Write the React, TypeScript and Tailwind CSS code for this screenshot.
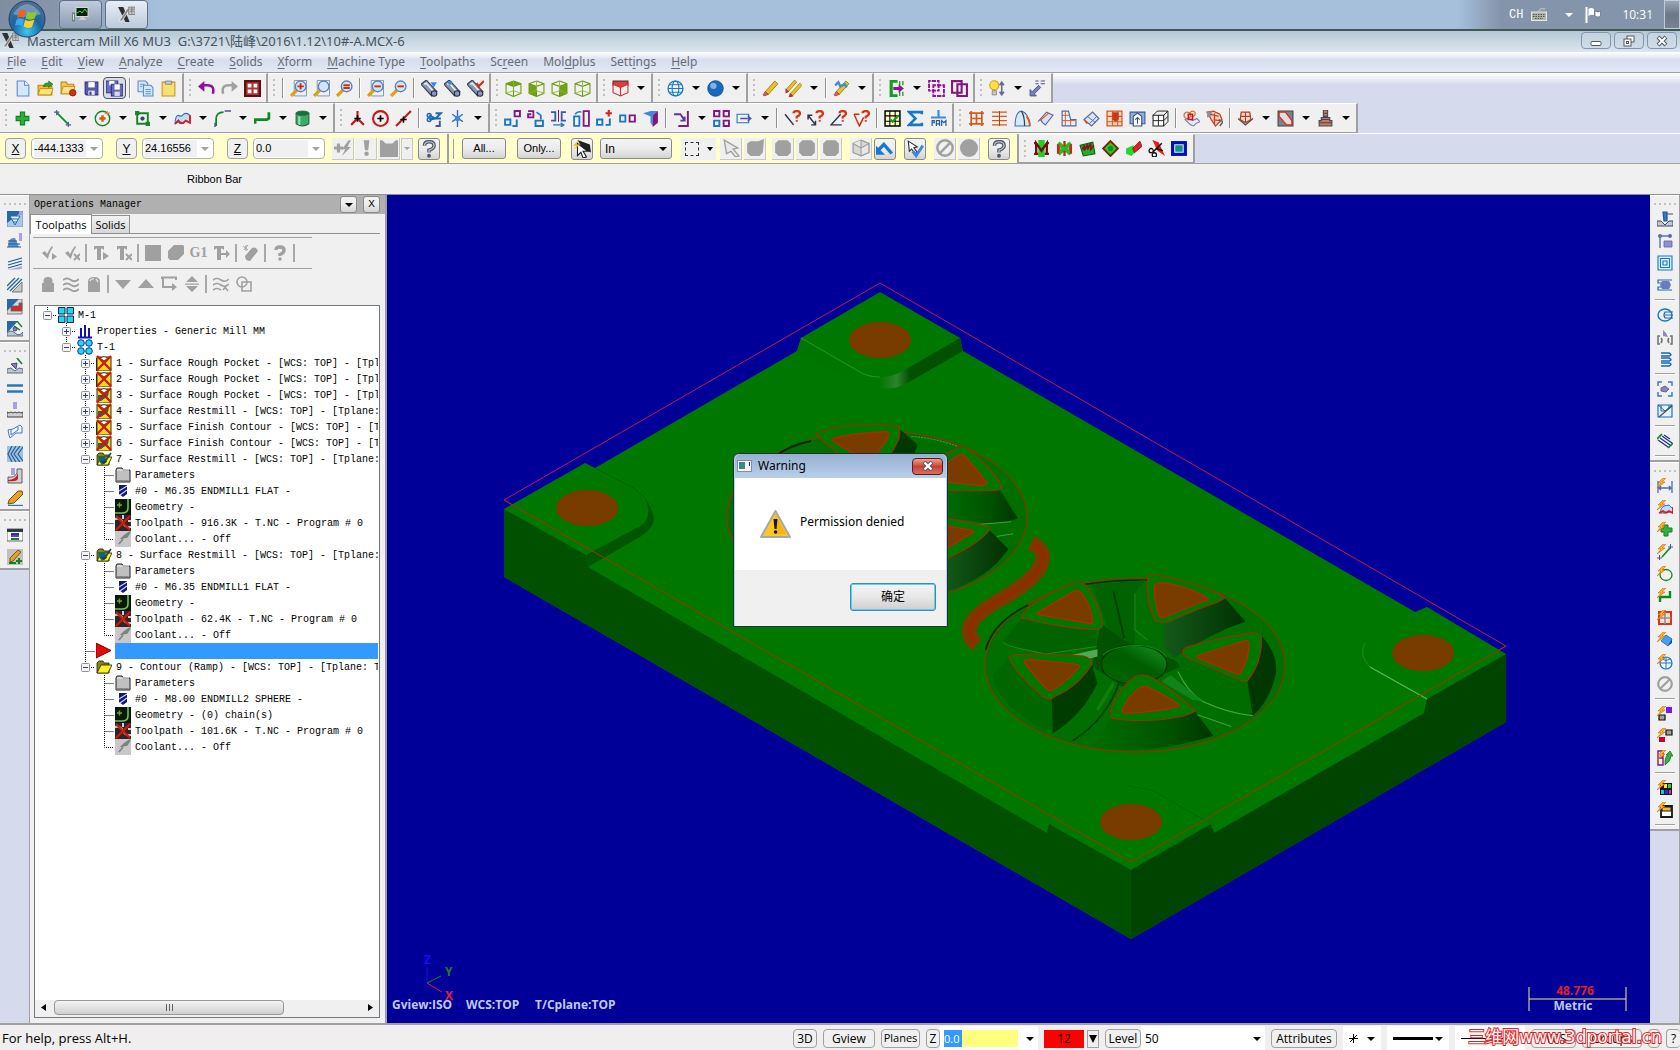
import { Fragment, type ReactNode } from "react";
import clsx from "clsx";

type Shape = [d: string, fill?: string, stroke?: string, width?: number];

const c = (x: number, y: number, r: number, ry = r) =>
  `M${x - r} ${y}a${r} ${ry} 0 1 0 ${2 * r} 0a${r} ${ry} 0 1 0 ${-2 * r} 0`;
const N = "none";

const CUBE = "M8 1L15 3.500V12.500L8 15.500L1 12.500V3.500Z";
const CUBE_IN = "M1 3.500L8 6L15 3.500M8 6V15.500";
const cube = (face: string): Shape[] => [
  [face, "#6fa316"],
  [CUBE, N, "#6a9a10", 1],
  [CUBE_IN, N, "#6a9a10", 1],
  ["M1 12.500L8 10L15 12.500M8 1V10", N, "#8db83c", 0.8],
];
const lens = (sign: string, dashed = false): Shape[] => [
  ...(dashed ? ([["M4 0.500H15.500V15H4Z", N, "#6a8ac0", 0.8]] as Shape[]) : []),
  ["M1 15L6.500 9.500", N, "#e0a010", 3],
  [c(10, 6, 5), "#cfe4fa", "#5a80b8", 1.3],
  [sign, N, "#d03010", 1.8],
];
const bino = (extra: Shape): Shape[] => [
  ["M0 4L5 0L15 11L10 15Z", "#8a95ae", "#333b55", 1],
  ["M3 4L5 3L12 11", N, "#e8ecf8", 1.6],
  [c(12.3, 12.7, 2.6), "#8898c0", "#222a44", 1],
  extra,
];
const pencil: Shape[] = [
  ["M3 11L12 1L15 3.500L6 13.500Z", "#e8c020", "#a07800", 0.8],
  ["M3 11L6 13.500L2 15L1 14Z", "#e06060", "#a03030", 0.7],
];
const bolt: Shape[] = [["M6 0L1 5H4L0 10L8 4H5L9 0Z", "#f8b820", "#d86010", 0.6]];
const ask = (d: string, color: string): Shape[] => [
  [d, N, color, 1.4],
  ["M9 3Q9 1 12 1Q15 1 15 3.500Q15 5 12 6.500V8", N, "#d03818", 2.2],
  ["M11 9.500H13V11H11Z", "#d03818"],
];
const redX: Shape = ["M1 1L15 15M15 1L1 15", N, "#d01808", 2.4];
const folder: Shape[] = [
  ["M1 4L3 2H7L8 4H13V14H1Z", "#8a8410", "#222200", 0.8],
  ["M1 14L5 6H16L12 14Z", "#fff020", "#222200", 0.8],
];
const G = "#a0a0a0";

const ICONS: Record<string, Shape[]> = {
  "New": [["M3 1H10L14 5V15H3Z", "#d4e8fc", "#5a8ac8", 1], ["M10 1V5H14", "#ffffff", "#5a8ac8", 1]],
  "Open": [["M1 5H6L7 6H14V14H1Z", "#f0c030", "#b88a10", 1], ["M3 8H15L13 14H1Z", "#ffe070", "#b88a10", 0.8], ["M6 6Q7 2 11 3V1L15 4L11 7V5Q9 5 8 6Z", "#30a030", "#107010", 0.6]],
  "Merge file": [["M1 2H6L7 4H13V13H1Z", "#f8c850", "#b88a10", 1], ["M3 6H14L12 13H1Z", "#ffe090", "#b88a10", 0.8], [c(12, 12, 3), "#d83010", "#901000", 0.8]],
  "Save": [["M2 2H14V14H3L2 13Z", "#5858b0", "#303080", 1], ["M5 2H11V7H5Z", "#ffffff"], ["M5 10H11V14H5Z", "#e8e8f8"], ["M6 11H8V14H6Z", "#404090"]],
  "Save as": [["M0 1H11V12H0Z", "#7070c0", "#303080", 1], ["M3 1H8V5H3Z", "#ffffff"], ["M5 4H16V15H5Z", "#6868b8", "#303080", 1], ["M8 4H13V9H8Z", "#ffffff"], ["M8 11H13V15H8Z", "#d8d8f0"]],
  "Copy": [["M1 1H8L10 3V11H1Z", "#d4e8fc", "#5a8ac8", 1], ["M6 5H13L15 7V15H6Z", "#d4e8fc", "#5a8ac8", 1], ["M8 9H13M8 11H13M8 13H13M3 4H7M3 6H5", N, "#5a8ac8", 0.9]],
  "Paste": [["M2 2H14V15H2Z", "#f8e070", "#c09820", 1], ["M5 1H11V4H5Z", "#c8c8c8", "#808080", 0.8]],
  "Undo": [["M14 13Q16 5 9 5H4", N, "#90109a", 2.4], ["M0 6L6 1V11Z", "#90109a"]],
  "Redo": [["M2 13Q0 5 7 5H12", N, G, 2.4], ["M16 6L10 1V11Z", G]],
  "Viewports": [["M1 1H15V15H1Z", "#b83030", "#581010", 2], ["M3.500 3.500H7V7H3.500ZM9 3.500H12.500V7H9ZM3.500 9H7V12.500H3.500ZM9 9H12.500V12.500H9Z", "#ffffff"]],
  "Zoom window": lens("M7 6H13M10 3V9", true),
  "Zoom target": lens("M0 0", true),
  "Unzoom previous": lens("M7 5H13M7 7.500H13"),
  "Unzoom window": lens("M7 6H13", true),
  "Unzoom 80%": lens("M7 6H13"),
  "Dynamic rotation": bino(["M9 2L15 2L12 7Z", "#3a8ae0"]),
  "Dynamic spin": bino(["M2 2L8 1L6 5Z", "#3a8ae0"]),
  "Previous view": bino(["M9 3L11 6L16 1", N, "#d03010", 2]),
  "Top view": cube("M8 1L15 3.500L8 6L1 3.500Z"),
  "Front view": cube("M1 3.500L8 6V15.500L1 12.500Z"),
  "Right view": cube("M15 3.500L8 6V15.500L15 12.500Z"),
  "Isometric view": cube("M0 0"),
  "Gview": [["M1 1H15V5L8 8L1 5Z", "#d84040", "#602020", 1], ["M1 4L8 7L15 4V12L8 15L1 12Z", "#ffe8e8", "#c03030", 1], ["M8 7V15", N, "#c03030", 1]],
  "Wireframe": [[c(8, 8, 7), "#f4faff", "#1878c0", 1.2], [c(8, 8, 3.2, 7), N, "#1878c0", 1], ["M1 8H15M2.500 4.500H13.500M2.500 11.500H13.500", N, "#1878c0", 1]],
  "Shaded": [[c(8, 8, 7.3), "#1868c0", "#104890", 0.8], [c(6, 5.5, 3), "#78b4f0"]],
  "Delete entities": pencil,
  "Delete duplicates": [["M1 9L9 0L11 2L3 11Z", "#e8c020", "#a07800", 0.7], ["M5 13L14 3L16 5L7 15Z", "#e8c020", "#a07800", 0.7], ["M1 9L3 11L1 12ZM5 13L7 15L4 16Z", "#d84848", "#a03030", 1]],
  "Undelete": [...pencil, ["M2 5L5 2L7 6L11 4L13 7", N, "#3a8ae0", 2.2]],
  "Hide entity": [["M9 1H3V15H9", N, "#10a020", 3], ["M11 1V5M14 1V5M11 11V15M14 11V15", N, "#10a020", 1.2], ["M5 6.500H10V4L15 8L10 12V9.500H5Z", "#90109a"]],
  "Blank entity": [["M1 1H10V10H1Z", N, "#90109a", 1.8], ["M5 5H15V15H5Z", N, "#90109a", 1.8], ["M0 3H16M0 13H16M3 0V16M13 0V16M0 8H16M8 0V16", N, "#f0f0f0", 0.9]],
  "Unblank entity": [["M1 1H10V12H1Z", N, "#801880", 2], ["M6 4H15V15H6Z", N, "#801880", 2]],
  "Hints": [[c(5, 5, 4.3), "#ffe040", "#d0a010", 1], ["M3 10H7V14H3Z", "#c8c8d0", "#808090", 0.8], ["M12 3V13M10 5L12 2L14 5M10 11L12 14L14 11", N, "#6868a0", 1.5]],
  "Origin": [["M1 15V9L3 11L9 5L11 7L5 13L7 15Z", "#7880b8", "#40488a", 0.8], ["M6 1H9M11 1H15M6 3.500H9M11 3.500H15", N, "#4a5290", 1]],

  "Point": [["M6 2H10V6H14V10H10V14H6V10H2V6H6Z", "#28b038", "#108020", 1]],
  "Line": [["M3 3L13 13", N, "#108820", 1.6], ["M0 2H5M2.500 0V5M11 14H16M13.500 11V16", N, "#4a5290", 1]],
  "Arc": [[c(8, 8, 6.8), N, "#108820", 1.3], ["M5 8H11M8 5V11", N, "#e05818", 2.4], ["M10 3H15M12.500 1V5", N, "#e08048", 1.2]],
  "Rectangle": [["M3 3H13V13H3Z", N, "#108820", 1.8], ["M1 1H5V5H1ZM11 11H15V15H11Z", "#108820"], [c(8, 8, 2), "#404060"]],
  "Surface": [["M1 13Q1 6 4 5Q7 7 9 4Q12 2 15 5V12Q12 9 9 12Q6 14 4 11Z", "#c0dcf8", "#3a6ab0", 1], ["M1 13L4 10Q6 13 9 12L11 10L15 12V5", N, "#d82020", 1.8]],
  "Fillet": [["M2 15V9Q2 2 9 2", N, "#108820", 1.7], ["M10 1H16M1 12V16", N, "#4a5290", 1.4]],
  "Spline": [["M1 13V9H12L14 8V2", N, "#108820", 2.6]],
  "Solid": [["M2 3V13Q8 17 14 13V3Z", "#40a868", "#1a6a38", 1], [c(8, 3, 6, 2), "#187040", "#1a6a38", 0.8], ["M5 6V14", N, "#90e0b0", 2]],
  "Trim 3": [["M8 1V8L2 14M8 8L14 14", N, "#c81818", 2], ["M5 8H11M8 5V11", N, "#000000", 1.5]],
  "Trim circle": [[c(8, 8, 7), N, "#c81818", 2], ["M5 8H11M8 5V11", N, "#000000", 1.6]],
  "Trim line": [["M1 15L15 1", N, "#c81818", 2], ["M5 9H11M8 6V12", N, "#000000", 1.5]],
  "Divide": [["M3 5L9 8H14M3 9L9 8L14 3H9", N, "#1868b8", 1.8], ["M9 15H13V10", N, "#4a5290", 1.8], [c(3, 5, 1.8), N, "#1868b8", 1.4], [c(3, 9, 1.8), N, "#1868b8", 1.4]],
  "Break": [["M8 0V16M3 4L13 11M13 4L3 11", N, "#3a6ac0", 1.3], [c(8, 8, 2.5), "#3a8ae0"]],
  "Translate": [["M1 9H6V14H1Z", N, "#1878c8", 1.8], ["M10 1H15V6H10Z", N, "#801880", 1.8], ["M8 15H12V9", N, "#1878c8", 1.8]],
  "Translate 3D": [["M1 1H6V7H1V4H4", N, "#801880", 1.7], ["M9 2L13 5V9", N, "#1878c8", 1.6], ["M8 10H15V15H8Z", N, "#1878c8", 1.8]],
  "Mirror": [["M1 2H5V10H1M15 2H11V10H15", N, "#3a5aa8", 1.7], ["M8 0V11", N, "#801880", 1], ["M3 14H13M10 12L13 14L10 16", N, "#1878c8", 1.2]],
  "Rotate": [["M1 6H6V15H1Z", N, "#1878c8", 1.7], ["M10 1H15V15H10Z", N, "#801880", 1.7], ["M2 4Q4 1 8 2", N, "#1878c8", 1.4]],
  "Scale": [["M1 9H6V14H1Z", N, "#1878c8", 1.8], ["M9 14H13V8", N, "#1878c8", 1.8], ["M9 3H15M12 0V6", N, "#d82020", 2]],
  "Offset": [["M1 5H6V11H1Z", N, "#1878c8", 1.7], ["M10 5H15V11H10Z", N, "#801880", 1.7]],
  "Contour offset": [["M1 3L8 1H15L10 5V15L8 12V6Z", "#3a8ae0"], ["M10 5L15 1V12L10 16Z", "#801880"]],
  "Project": [["M14 1V15H5", N, "#801880", 1.8], ["M1 4H7L11 10M7 10H11V6", N, "#5838a0", 1.7]],
  "Rectangular array": [["M1 1H6V6H1ZM10 1H15V6H10ZM10 10H15V15H10Z", N, "#801880", 1.8], ["M1 10H6V15H1Z", N, "#1878c8", 1.8]],
  "Roll": [["M1 4H12V12H1Z", N, "#1878c8", 1], ["M4 8H14M11 5.500L14 8L11 10.500", N, "#5050a0", 1.2]],
  "Analyze entity": ask("M1 4L9 14", "#303048"),
  "Analyze distance": ask("M1 5L8 14M1 9V5H5M4 14H8V10", "#303048"),
  "Analyze angle": ask("M10 4L1 14H11", "#303048"),
  "Analyze dynamic": ask("M1 4L6 15L10 7M1 4H6", "#c83010"),
  "Level manager": [["M1 1H15V15H1Z", "#ffffc0", "#000000", 1.4], ["M5.500 1V15M10.500 1V15M1 5.500H15M1 10.500H15", N, "#000000", 1], ["M6 9L8 11L14 5", N, "#10a020", 2]],
  "Summary": [["M14 4V2H2L8 8L2 14H14V12", N, "#1878c8", 2.4]],
  "RAM saver": [["M7 0H9V6H15V8H1V6H7Z", "#3a8ae0"], ["M2 15V10H4V12H2M6 15V10H9V15M6 13H9M11 15V10L13 12L15 10V15", N, "#205898", 1.1]],
  "Create ruled": [["M3 1V15M13 1V15M1 3H15M1 13H15M8 3V13M3 8H13", N, "#d85818", 1.6]],
  "Create swept": [["M1 2H15M1 6H15M1 10H15M1 14H15", N, "#d85818", 1.4], ["M8 1V15", N, "#b04010", 1]],
  "Create draft": [["M1 15Q1 2 7 1Q14 3 15 15Z", "#d8e8fc", "#3a6ab0", 1], ["M7 1Q10 6 10 15", "#ffffff", "#404040", 1.2], ["M12 6Q15 10 15 15", N, "#d85818", 1.6]],
  "Create extrude": [["M1 11L9 2L15 5L8 14Q4 12 4 9", "#e0e0f0", "#5a6aa0", 1.1], ["M3 10L11 3", N, "#d85818", 1]],
  "Create net": [["M2 1H8L10 9H15V15H2Z", "#e8f0fc", "#4a6ab0", 1.1], ["M5 1V15M2 5H9M2 10H14M10 10V15", N, "#d85818", 0.9]],
  "Create fence": [["M1 9L9 2L15 8L8 15Z", "#d8e8fc", "#5a6aa0", 1.1], ["M4 6L12 12M6 13L13 6", N, "#5a6aa0", 0.9], ["M1 9L4 13", N, "#d85818", 1.4]],
  "Create offset surface": [["M1 1H15V15H1Z", "#f8d8c8", "#d85818", 1.2], ["M6 1V15M11 1V15M1 6H15M1 11H15", N, "#d85818", 1], ["M6 2H12V9L9 11L6 9Z", "#c83818"]],
  "Create from solid": [["M1 2H15V13H1Z", "#8ab4e4", "#3a5a90", 1], ["M4 15V6L8 3L12 6V15Z", "#ffffff", "#305080", 1], ["M8 13V7M6 9L8 7L10 9", N, "#305080", 1]],
  "Create box": [["M1 5H11V15H1Z", "#ffffff", "#202020", 1], ["M1 5L5 1H15L11 5M15 1V11L11 15M6 5V15M1 10H11L15 6", N, "#202020", 0.9]],
  "Surface trim": [["M2 9Q6 7 9 10L13 8L16 11Q12 12 10 15L7 14Z", "#e8e8f4", "#6a7ab0", 1], [c(4, 5, 3), N, "#e07030", 1.2], [c(9, 3.5, 2.5), N, "#e07030", 1.2], ["M5 4H9V9H5Z", N, "#c81818", 1.5]],
  "Surface extend": [["M1 2L7 1L13 4L15 9L9 15L5 9Z", "#f8d8c8", "#c84020", 1.2], ["M1 2L6 1L5 6L1 7Z", "#909098"], ["M4 4L12 6M7 9L13 10M8 3V13", N, "#c84020", 1.2], ["M12 9L16 11L13 15", N, "#606068", 1.4]],
  "Surface fillet": [["M1 8L8 14L15 8", N, "#404858", 1.2], ["M4 2H12L13 9L8 12L3 9Z", "#f8e0d8", "#c03818", 1.2], ["M8 2V12M3 6H13", N, "#c03818", 1]],
  "Surface blend": [["M1 1H15V15H1Z", "#808088", "#404048", 1], ["M2 2H8L14 10V14H9L2 6Z", "#e8d8e0", "#c03818", 1.2]],
  "Surface tower": [["M6 0H10V6H6ZM4 7H12V10H14V15H2V10H4Z", "#c87858", "#404858", 1], ["M2 12H14M4 9H12M6 3H10", N, "#404858", 1]],

  "AutoCursor fast point": [["M0 8H8M4 4V12", N, G, 2.8], ["M13 1L7 9H10L7 15L15 7H12L15 1Z", G]],
  "AutoCursor override": [["M6 1H11L10 10H7Z", G], [c(8.5, 13, 2), G]],
  "AutoCursor android": [["M0 1H2L5 4H11L14 1H16V16H0Z", G]],
  "Help": [["M4 5Q4 1.500 8 1.500Q12.500 1.500 12.500 5Q12.500 7.500 8 9V11", N, "#505868", 3.2], ["M4 5Q4 1.500 8 1.500Q12.500 1.500 12.500 5Q12.500 7.500 8 9V11", N, "#c8d0dc", 1], [c(8, 14, 1.7), "#505868"]],
  "Select cursor": [["M4 0L15 4L16 11L11 9L7 5Z", "#202020"], ["M4 3L13 10L9 10L12 15L9 16L7 11L4 14Z", "#ffffff", "#202020", 1], ["M5 0L0 5H3L0 9L6 4H3Z", "#f8b820"]],
  "Arrow": [["M2 1L14 8L10 9L15 15L12 16L8 11L4 13Z", "#e8e8e8", G, 1.2]],
  "Hex": [["M4 1H12L15 4V12L12 15H4L1 12V4Z", G]],
  "Hex corner": [["M4 2H11L16 0L15 12L12 15H4L1 12V4Z", G]],
  "Shaded hex": [["M8 1L15 4V12L8 15L1 12V4Z", "#d8d8d8", G, 1.2], ["M8 8V15L15 12V4ZM8 1V8L1 4", "#e8e8e8", G, 1]],
  "Undo selection": [["M1 10L7 4L14 12", N, "#1878d0", 3], ["M0 5V13H8Z", "#1878d0"]],
  "Validate": [["M2 1L10 6L7 7L10 11L8 12L5 8L3 10Z", "#ffffff", "#303040", 1], ["M6 10L9 14L15 5", N, "#3a8ae0", 2.6]],
  "None": [[c(8, 8, 6.8), N, G, 2.2], ["M3.500 12.500L12.500 3.500", N, G, 2.2]],
  "Disc": [[c(8, 8, 8), G]],
  "Moldplus": [["M5 0H11V16H5Z", "#20d020"], ["M3 13V3L8 10L13 3V13M1 13H5M11 13H15M1 3H3M13 3H15", N, "#701010", 2.2]],
  "Mold split": [["M2 3L14 13M14 3L2 13", N, "#20c020", 4], ["M8 1V6M8 10V15M1 8H4M12 8H15M2 13V4M14 13V4", N, "#d02020", 2.2]],
  "Mold surface": [["M1 5L13 2L15 13L4 15Z", "#20b030", "#106010", 1], ["M3 9L5 5V10L8 4V9L11 3V9L14 5", N, "#801818", 1.5]],
  "Mold diamond": [["M8 1L15 8L8 15L1 8Z", "#20d020", "#802010", 1.8], [c(8, 8, 2.5), "#109020"]],
  "Mold slide": [["M1 8L8 5L10 11L6 15L1 13Z", "#20d830"], ["M7 8L14 1L16 6L9 12Z", "#e02020", "#901010", 0.7]],
  "Mold cut": [["M4 0L10 2L16 15L9 10Z", "#e02020"], ["M13 3L4 12M7 8L14 10", N, "#101010", 1.4], [c(3, 10, 2), "#fff", "#101010", 1.2], [c(6, 14, 2), "#fff", "#101010", 1.2]],
  "Mold frame": [["M0 1H15V15H0Z", "#0010b8"], ["M3.500 4.500H11.500V11.500H3.500Z", "#109088", "#d8e8f0", 1]],

  "Select all operations": [["M1 8L4 6L6 9Q9 3 11 1L12 2Q8 8 7 14Z", G], ["M11 8L16 11.500L11 15Z", G]],
  "Select all dirty": [["M1 8L4 6L6 9Q9 3 11 1L12 2Q8 8 7 14Z", G], ["M10 9L16 15M16 9L10 15", N, G, 2]],
  "Regenerate all": [["M1 1H11V5L9 3.500H8V15H4V3.500H3L1 5Z", G], ["M10 7L16 11L10 15Z", G]],
  "Regenerate dirty": [["M1 1H11V5L9 3.500H8V15H4V3.500H3L1 5Z", G], ["M10 9L16 15M16 9L10 15", N, G, 2]],
  "Backplot": [["M0 0H16V16H0Z", G]],
  "Verify": [["M6 0H15L16 1V9L10 15H2L0 13V6Z", G]],
  "Feed speed": [["M0 1H10V5L8 3.500H7V15H3V3.500H2L0 5Z", G], ["M7 8H12V5L16 9L12 13V10H7Z", G]],
  "Delete all operations": [["M2 11L9 3Q13 1 15 6L7 16Q2 16 2 11Z", G], ["M0 1L5 5M5 0L1 5M3 0V6", N, G, 1]],
  "Panel help": [["M4 5Q4 2 8 2Q12 2 12 5Q12 8 8 9.500V11", N, G, 3.4], [c(8, 14, 1.8), G]],
  "Toggle locking": [["M2 7H14V16H2Z", G], ["M4.500 8V5Q4.500 2 8 2Q11.500 2 11.500 5V8", G, G, 2]],
  "Toggle display": [["M0 4Q4 1 8 4T16 3M0 9Q4 6 8 9T16 8M0 14Q4 11 8 14T16 13", N, G, 1.8]],
  "Toggle posting": [["M2 6Q2 1 8 1Q14 1 14 6V16H2Z", G], ["M4 5Q5 2 8 3M10 3L12 6", N, "#f0f0f0", 1.2]],
  "Move down": [["M0 4H16L8 13Z", G]],
  "Move up": [["M0 12H16L8 3Z", G]],
  "Insert arrow": [["M1 3V1.500H15V4M2 2V11H13", N, G, 2], ["M11 7L16 11L11 15Z", G]],
  "Scroll arrow": [["M8 0L14 6H2ZM8 16L2 10H14ZM1 7.500H15V8.700H1Z", G]],
  "Only display": [["M0 4Q4 1 8 4T16 3M0 9Q4 6 8 9T16 8M0 14Q4 11 8 14M11 10L15 15M14 9L10 14", N, G, 1.6]],
  "Display geometry": [[c(6, 6, 5), N, G, 1.6], ["M6 6H15V15H6Z", N, G, 1.6]],

  "Rough parallel": [["M0 0H16V16H0Z", "#a8c8e8", "#808080", 0.8], ["M0 0H16L0 12Z", "#2868a8"], ["M3 5H13L8 14ZM5 8H11M6 11H10", "#e8f0f8", "#2868a8", 1], ["M12 0H15V4H12Z", "#a8a0e0"]],
  "Rough radial": [["M1 14Q1 4 8 5L12 14Z", "#5a90c8"], ["M1 8H10M1 11H13M0 14H14", N, "#205898", 1.2], ["M12 0H15V8H12Z", "#a8a0e0"]],
  "Rough flowline": [["M1 7L15 3M1 10L15 6M1 13L15 9", N, "#205898", 1.2], ["M1 15L15 11V14Z", "#b0a8e0"]],
  "Rough contour": [["M5 15H15V5Z", "#c8c8c8", "#606060", 0.8], ["M0 13L12 1M3 14L15 2M0 9L8 1", N, "#2868a8", 1.4]],
  "Rough restmill": [["M0 0H15V15H0Z", "#d8d8d8", "#606060", 0.8], ["M0 0H12L0 12Z", "#2868a8"], ["M4 7H12V4H15V12H4Z", "#c83030", "#606060", 0.8]],
  "Rough pocket": [["M0 0H11L0 12Z", "#2868a8"], ["M0 12Q4 8 8 12T16 11V15H0Z", "#b8c8d8", "#506070", 0.9], ["M7 5L13 9M10 0L15 6", N, "#108020", 1.3], [c(8, 8, 2), "#8878d0", "#303060", 0.8]],
  "Finish pencil": [["M0 11L4 10L8 13L12 10L16 11V15H0Z", "#b8c8d8", "#506070", 0.9], ["M10 0L15 6", N, "#108020", 1.6], ["M4 6L10 5L9 11Z", "#8878d0", "#303060", 0.8]],
  "Finish parallel": [["M0 5.500H16M0 11.500H16", N, "#2878b8", 2.4]],
  "Finish scallop": [["M0 10L2 11L4 10L6 11L8 10L10 11L12 10L14 11L16 10V15H0Z", "#d0d0d0", "#404040", 1], ["M6 0H10V7H6Z", "#a8a0e0"]],
  "Finish flowline": [["M1 6L6 5L13 1L15 3V9L9 9L3 14L2 11Z", "#f0f4fc", "#4878b8", 1], ["M4 6V11L11 6V3", N, "#4878b8", 1]],
  "Finish blend": [["M0 0H16V16H0Z", "#a0c0dc"], ["M5 0L1 8L5 16M9 0L4 8L9 16M13 0L7 8L13 16M16 1L11 8L16 15", N, "#2060a0", 1.2]],
  "Finish leftover": [["M1 15V9Q8 10 10 5V1H15V15Z", "#d0d0d0", "#505050", 0.9], ["M1 12Q9 12 11 5V11Q9 14 1 13Z", "#c82020"], ["M4 0H8V7H4Z", "#a8a0e0"]],
  "Finish steep": [["M2 10L11 1H15L16 4L7 13L1 14Z", "#e8a020", "#604010", 0.9], ["M1 15.500H16", N, "#2878c8", 1.4]],
  "Operation list": [["M0 2H16V14H0Z", "#ffffff", "#606870", 1], ["M0 2H16V5H0Z", "#303848"], ["M4 6H12V8H4Z", "#1830d0"], ["M4 8H12V10H4Z", "#8030c0"], ["M4 11H12V13H4Z", "#108030"]],
  "Edit operation": [["M0 0H16V16H0Z", "#c0c0c0"], ["M3 9L11 1L14 3L6 12L3 13Z", "#e8a020", "#604010", 0.8], ["M9 12H15M12 9V15M2 14H9", N, "#108020", 2]],

  "Contour toolpath": [["M0 10H4L8 14L12 10H16V15H0Z", "#c0c8d0", "#404858", 1], ["M6 1H10V10H7ZM10 3H16", "#3878c0", "#205898", 1.2]],
  "Drill toolpath": [["M3 13V3H13M13 3V1M3 15V13", N, "#4878b8", 1.4], [c(3, 3, 2), "#6868a8"], [c(13, 3, 2), "#6868a8"], ["M7 8H15V14H7Z", "#9090d0", "#6060a0", 0.8]],
  "Pocket toolpath": [["M1 1H15V15H1ZM3.500 3.500H12.500V12.500H3.500ZM6 6H10V10H6Z", "#d8f0fc", "#1878c0", 1.1]],
  "Face toolpath": [["M15 3H1V6H13M15 13H1V10H13", N, "#1868b8", 1.2], ["M5 4H12L14 8L12 12H5L3 8Z", "#7078c0"]],
  "Swept 2D": [[c(8, 8, 7, 6), N, "#1878c0", 1.4], ["M16 5H8Q6 8 8 11H16M8 8H16", N, "#1868b8", 1.2]],
  "Revolved": [["M3 7H1V15H3M13 7H15V15H13M4 9Q6 11 4 14M12 9Q10 11 12 14", N, "#707070", 1.5], ["M6 1L9 4L11 8L6 7Z", "#8888c8"]],
  "Lofted": [["M4 2H12Q16 4 12 5H4M4 7H12Q16 9 12 10H4M4 12H12Q16 13 12 15H4", N, "#1868b8", 1.4]],
  "Trim toolpath": [["M1 5V1H5M11 1H15V5M15 11V15H11M5 15H1V11", N, "#3878c0", 1.4], ["M4 7L8 5L12 8L9 11L4 10Z", "#8888b8", "#505080", 0.8]],
  "Transform toolpath": [["M1 2H15V14H1Z", "#e8f4fc", "#1868b8", 1.1], ["M1 2L8 8L15 2M4 2V8M8 8H4M12 2V6", N, "#1868b8", 1], ["M15 3L2 14", N, "#405060", 1.2]],
  "Thread": [["M0 6L5 1M11 15L16 10", N, "#108020", 1.6], ["M1 7L11 14M3 5L13 12M5 3L15 10M7 2L13 6", N, "#203890", 1.3]],
  "Smart dimension": [["M1 3V15M15 3V15M2 10H14M4 8L2 10L4 12M12 8L14 10L12 12", N, "#4870a8", 1.3], ...bolt],
  "Fast surface": [["M3 13Q4 7 7 6L12 5L16 9V13Q12 11 9 13Z", "#c0dcf8", "#3a6ab0", 1], ["M2 13L6 11Q9 14 12 11L16 13V7", N, "#d82020", 1.8], ...bolt],
  "Fast point": [["M7 3H11V6H15V10H11V14H7V10H4V6H7Z", "#38b040", "#108020", 1], ...bolt],
  "Fast line": [["M5 13L13 4", N, "#108820", 1.6], ["M11 3H16M13.500 0V5M0 14H5M2.500 11V16", N, "#4a5290", 1], ...bolt],
  "Fast arc": [[c(9, 9, 6, 5.5), N, "#108820", 1.3], ...bolt],
  "Fast spline": [["M3 14V9H13V3", N, "#108820", 2.4], ...bolt],
  "Fast net": [["M2 2H14V14H2Z", "#f0e0d8", "#e03018", 2], ["M8 2V14M2 8H14", N, "#909090", 1.6], ...bolt],
  "Fast solid": [["M9 3L15 7L11 14L4 9Z", "#48a0f0", "#1868b8", 0.8], ["M11 14L15 7V11Z", "#1050a0"], ...bolt],
  "Fast wireframe": [[c(9, 9, 6), "#f4faff", "#1878c0", 1.2], ["M3 9H15M9 3V15M5 5Q9 8 13 5", N, "#1878c0", 1], ...bolt],
  "Fast attribute": [["M9 1H15V7H9Z", "#7818f0"], ["M2 9H8V14H2Z", "#a0a0a0", "#101010", 1.2], ...bolt],
  "Fast colour": [["M9 2H15V7H9Z", "#a0a0a0", "#101010", 1.2], ["M2 9H8V14H2Z", "#c80030"], ...bolt],
  "Fast group": [["M1 1H6V15H1ZM1 8H6", N, "#801880", 1.4], ["M8 13Q8 6 11 5H9L13 1L16 6H14Q14 11 8 15Z", "#38b040", "#108020", 0.8], ...bolt],
  "Fast palette": [["M3 3H15V15H3Z", "#181818"], ["M7 4H10V8H7Z", "#f0f020"], ["M11 4H14V8H11Z", "#30d030"], ["M4 10H7V14H4Z", "#20c0e0"], ["M8 10H11V14H8Z", "#2030e0"], ["M12 10H14V14H12Z", "#e020e0"], ...bolt],
  "Fast level": [["M4 4H15V15H4Z", "#ffffff", "#181818", 1.8], ["M5 5H14V9H5Z", "#f0c020", "#181818", 1], ...bolt],

  "Machine group": [["M0.500 0.500H7V7H0.500ZM9 0.500H15.500V7H9ZM0.500 9H7V15.500H0.500ZM9 9H15.500V15.500H9Z", "#20d8f0", "#102050", 1]],
  "Properties": [["M1 14.500H15M4 14V5M8 14V2M12 14V5", N, "#1010b8", 2]],
  "Toolpath group": [[c(4, 4, 3.3) + c(12, 4, 3.3) + c(4, 12, 3.3) + c(12, 12, 3.3), "#20d8f0", "#1030a0", 1]],
  "Dirty": [["M0 3H2V16H0Z", "#402000"], ["M1 2H15V16H1Z", "#f8d820", "#303000", 1], ["M4 3Q8 0 12 3L8 6Z", "#ffffff", "#402000", 0.8], redX],
  "Dirty checked": [["M1 2H15V16H1Z", "#f8d820", "#303000", 1], ["M4 3Q8 0 12 3L8 6Z", "#ffffff", "#402000", 0.8], ["M2 8H8L13 4L12 9L5 14H2Z", "#107068"], redX],
  "Folder open": folder,
  "Folder checked": [...folder, ["M2 5H9L11 11L6 14L3 10Z", "#106868"], ["M6 10L8 12L15 2", N, "#203860", 1.6]],
  "Parameters": [["M1 3L2 1H7L8 3H15V15H1Z", "#c0c0c0", "#202020", 1], ["M2 3H14", N, "#f0f0f0", 1], ["M1 14H15", N, "#707070", 1.4]],
  "Tool": [["M4 2H12V11L8 14L4 11Z", "#101878"], ["M4 8L12 3M5 12L12 7", N, "#d8d8f8", 1.1]],
  "Geometry": [["M0 0H16V16H0Z", "#0a180a"], ["M13 0V9Q13 14 7 14H0", N, "#70c060", 1.6], ["M2 6H7M4.500 3.500V8.500", N, "#70a040", 1.4]],
  "Toolpath file": [["M0 0H16V16H0Z", "#282828"], ["M0 4Q6 3 8 8T16 12M8 0V4M13 6H16", N, "#d0d0d0", 2], redX],
  "Coolant": [["M0 0H16V16H0Z", "#c8c8c8"], ["M4 13L8 8M7 7L12 6L15 1L12 3L9 5Z", "#909090", "#808080", 1.6]],
  "Insert position": [["M0 0L15 7.500L0 15Z", "#e80808", "#700000", 1]],
};

function Icon({ name, size = 17 }: { name: string; size?: number }) {
  return (
    <svg width={size} height={size} viewBox="0 0 16 16" aria-hidden className="shrink-0">
      {ICONS[name].map(([d, fill, stroke, width], i) => (
        <path key={i} d={d} fill={fill ?? "none"} stroke={stroke} strokeWidth={width} />
      ))}
    </svg>
  );
}

function Caret({ className = "" }: { className?: string }) {
  return (
    <svg width="8" height="4" viewBox="0 0 8 4" aria-hidden className={clsx("shrink-0", className)}>
      <path d="M0 0H8L4 4Z" fill="currentColor" />
    </svg>
  );
}

function ToolButton({ name }: { name: string }) {
  const pressed = name === "Save as";
  return (
    <button
      aria-label={name}
      className={clsx(
        "flex h-[22px] w-[23px] items-center justify-center",
        pressed && "rounded border border-gray-600 bg-[#d8dce4]",
      )}
    >
      <Icon name={name} />
    </button>
  );
}

// "|" is a separator, "v" a drop-down arrow, anything else an icon name
function ToolItems({ items }: { items: string[] }) {
  return (
    <>
      {items.map((item, i) => (
        <Fragment key={i}>
          {item === "|" && <span className="mx-[3px] h-5 w-[2px] border-r border-white bg-[#909090]" />}
          {item === "v" && (
            <button aria-label="More" className="flex h-5 w-[17px] items-center justify-center text-black">
              <Caret />
            </button>
          )}
          {item !== "|" && item !== "v" && <ToolButton name={item} />}
        </Fragment>
      ))}
    </>
  );
}

function Grip() {
  return <span className="ml-[5px] mr-1 h-[18px] w-[2px] bg-[repeating-linear-gradient(to_bottom,#c0c0c0_0_2px,transparent_2px_5px)]" />;
}

function ToolBar({ items }: { items: string[] }) {
  return (
    <div role="toolbar" className="flex items-center border-r-2 border-b border-t border-t-white border-r-[#a0a0a0] border-b-[#a0a0a0] bg-[#f0f0f0] pr-[2px]">
      <Grip />
      <ToolItems items={items} />
    </div>
  );
}

const ROW_ONE = [
  ["New", "Open", "Merge file", "Save", "Save as", "|", "Copy", "Paste"],
  ["Undo", "Redo", "Viewports"],
  ["|", "Zoom window", "Zoom target", "Unzoom previous", "|", "Unzoom window", "Unzoom 80%", "|", "Dynamic rotation", "Dynamic spin", "Previous view"],
  ["Top view", "Front view", "Right view", "Isometric view"],
  ["Gview", "v"],
  ["Wireframe", "v", "Shaded", "v"],
  ["Delete entities", "Delete duplicates", "v", "|", "Undelete", "v"],
  ["Hide entity", "v", "Blank entity", "Unblank entity"],
  ["Hints", "v", "Origin"],
];

const ROW_TWO = [
  ["Point", "v", "Line", "v", "Arc", "v", "Rectangle", "v", "Surface", "v", "Fillet", "v", "Spline", "v", "Solid", "v"],
  ["Trim 3", "Trim circle", "Trim line", "|", "Divide", "Break", "v"],
  ["Translate", "Translate 3D", "Mirror", "Rotate", "Scale", "Offset", "Contour offset", "|", "Project", "v", "Rectangular array", "Roll", "v", "|", "Analyze entity", "Analyze distance", "Analyze angle", "Analyze dynamic", "|", "Level manager", "Summary", "RAM saver"],
  ["Create ruled", "Create swept", "Create draft", "Create extrude", "Create net", "Create fence", "Create offset surface", "Create from solid", "Create box", "|", "Surface trim", "Surface extend", "|", "Surface fillet", "v", "Surface blend", "v", "Surface tower", "v"],
];

const MOLDPLUS = ["Moldplus", "Mold split", "Mold surface", "Mold diamond", "Mold slide", "Mold cut", "Mold frame"];

const LEFT_BARS = [
  ["Rough parallel", "Rough radial", "Rough flowline", "Rough contour", "Rough restmill", "Rough pocket"],
  ["Finish pencil", "Finish parallel", "Finish scallop", "Finish flowline", "Finish blend", "Finish leftover", "Finish steep"],
  ["Operation list", "Edit operation"],
];

const RIGHT_BARS = [
  ["Contour toolpath", "Drill toolpath", "Pocket toolpath", "Face toolpath", "|", "Swept 2D", "Revolved", "Lofted", "|", "Trim toolpath", "Transform toolpath", "|", "Thread", "|"],
  ["Smart dimension", "Fast surface", "Fast point", "Fast line", "Fast arc", "Fast spline", "Fast net", "Fast solid", "Fast wireframe", "None", "|", "Fast attribute", "Fast colour", "Fast group", "|", "Fast palette", "Fast level", "|"],
];

function Taskbar() {
  return (
    <header className="relative z-10 flex h-[31px] shrink-0 items-stretch border-b-2 border-[#405858] bg-[#a6c0dc] bg-[linear-gradient(to_right,#7f8da3_0,#8794aa_50px,#a6c0dc_160px)]">
      <button aria-label="Start" className="-mb-2 ml-2 h-[38px] w-[38px]">
        <svg viewBox="0 0 38 38" aria-hidden>
          <defs>
            <radialGradient id="orb" cx="50%" cy="85%" r="80%">
              <stop offset="0" stopColor="#40c8f0" />
              <stop offset="0.5" stopColor="#1a66a0" />
              <stop offset="1" stopColor="#506c90" />
            </radialGradient>
          </defs>
          <circle cx="19" cy="19" r="18" fill="url(#orb)" stroke="#1c4468" />
          <path d="M5 14Q19 -6 33 14Q19 20 5 14Z" fill="#a8c0d8" opacity="0.5" />
          <path d="M11 11Q14 8 18 11L16 18Q13 16 9 18Z" fill="#f06028" />
          <path d="M19.500 11.500Q24 14 29 11L27 18Q23 21 17.500 18.500Z" fill="#8cc830" />
          <path d="M8.500 19.500Q12 17 16 19.500L14 26Q10 24 7 26Z" fill="#38a8f0" />
          <path d="M17 20Q22 22 26.500 19.500L24 27Q20 29 15.500 26.500Z" fill="#f8d030" />
        </svg>
      </button>
      <button aria-label="Monitor" className="ml-[13px] flex w-[43px] items-center justify-center rounded-sm border border-[#5f7088] bg-linear-to-b from-[#c0ccdc] to-[#8c9cb4]">
        <svg width="17" height="15" viewBox="0 0 17 15" aria-hidden>
          <rect x="0.500" y="6" width="2" height="8" fill="#d0e0c0" stroke="#708070" />
          <rect x="4" y="0.500" width="12" height="9" fill="#082008" stroke="#d8d8d8" />
          <path d="M5 6L8 4L10 6L13 2L15 5" fill="none" stroke="#30e040" />
          <path d="M7 13H14L12 10H9Z" fill="#d0d0d0" />
        </svg>
      </button>
      <button aria-label="Mastercam" className="ml-[3px] flex w-[43px] items-center justify-center rounded-sm border border-[#5f7088] bg-linear-to-b from-[#e8eef6] to-[#bccadc]">
        <XLogo />
      </button>
      <div className="ml-auto flex items-center bg-linear-to-r from-transparent to-[#8494aa] to-20% pl-[52px] font-['Open_Sans'] text-xs text-white">
        <span className="font-['Liberation_Mono']">CH</span>
        <svg width="16" height="13" viewBox="0 0 16 13" aria-hidden className="ml-2">
          <path d="M8 3Q8 0 14 1" fill="none" stroke="#d0d0c8" />
          <rect x="0.500" y="4" width="15" height="8.500" fill="#b0b4b0" stroke="#e8e8e0" />
          <path d="M2 6.500H14M2 8.500H14M4 10.500H12" stroke="#505860" strokeDasharray="1.500 1" />
        </svg>
        <button aria-label="Show hidden icons" className="ml-[18px]"><Caret /></button>
        <svg width="17" height="16" viewBox="0 0 17 16" aria-hidden className="ml-3">
          <path d="M1.500 0V16" stroke="#fff" strokeWidth="2" />
          <path d="M3.500 2Q6 0 9 2V8Q6 7 3.500 9Z" fill="#fff" />
          <path d="M10 4Q13 6 15.500 4V9Q13 11 10 9Z" fill="#fff" stroke="#505c70" strokeWidth="0.600" />
        </svg>
        <span className="ml-5">10:31</span>
        <button aria-label="Show desktop" className="ml-[11px] h-full w-4 border border-[#c0ccd8] bg-linear-to-b from-[#9aa6b6] via-[#6c7888] to-[#788494]" />
      </div>
    </header>
  );
}

function XLogo() {
  return (
    <svg width="17" height="17" viewBox="0 0 16 16" aria-hidden className="shrink-0">
      <path d="M0 1H5L11 15H7Z" fill="#303030" />
      <path d="M9 2L11 3L4 14L1 14Z" fill="#888" stroke="#fff" strokeWidth="0.600" />
      <path d="M10 1H16V8H10Z" fill="#c8c8c8" stroke="#707070" strokeWidth="0.700" />
      <path d="M11 3H15M11 5H15M13 1V8" stroke="#707070" strokeWidth="0.700" />
    </svg>
  );
}

function TitleBar() {
  const button = "flex h-[17px] w-[30px] items-center justify-center rounded-sm border border-[#8494ac] bg-[#cbd9e8]/60";
  return (
    <div className="flex h-[21px] shrink-0 items-center bg-linear-to-b from-[#b6c8d4] to-[#dbe6f0] pb-0.5 pl-0.5 pr-[3px]">
      <XLogo />
      <h1 className="ml-2 whitespace-pre font-['Noto_Sans','Noto_Sans_CJK_SC',sans-serif] text-[13px] leading-[18px] text-[#46525e]">
        {"Mastercam Mill X6 MU3  G:\\3721\\陆峰\\2016\\1.12\\10#-A.MCX-6"}
      </h1>
      <div className="ml-auto flex gap-[3px]">
        <button aria-label="Minimize" className={button}>
          <svg width="12" height="12" viewBox="0 0 12 12"><rect x="1" y="6.500" width="10" height="4" rx="1" fill="#fff" stroke="#505860" /></svg>
        </button>
        <button aria-label="Restore" className={button}>
          <svg width="12" height="12" viewBox="0 0 12 12" fill="#fff" stroke="#505860">
            <rect x="4" y="1" width="7" height="6" /><rect x="1" y="4" width="7" height="7" /><rect x="3.500" y="6.500" width="2" height="2" />
          </svg>
        </button>
        <button aria-label="Close" className={button}>
          <svg width="12" height="12" viewBox="0 0 12 12">
            <path d="M2 2L10 10M10 2L2 10" stroke="#505860" strokeWidth="4" /><path d="M2.500 2.500L9.500 9.500M9.500 2.500L2.500 9.500" stroke="#fff" strokeWidth="2" />
          </svg>
        </button>
      </div>
    </div>
  );
}

const MENUS: [string, string, string][] = [
  ["", "F", "ile"], ["", "E", "dit"], ["", "V", "iew"], ["", "A", "nalyze"], ["", "C", "reate"], ["", "S", "olids"], ["", "X", "form"],
  ["", "M", "achine Type"], ["", "T", "oolpaths"], ["Sc", "r", "een"], ["Mol", "d", "plus"], ["Sett", "i", "ngs"], ["", "H", "elp"],
];

function MenuBar() {
  return (
    <nav className="flex h-[21px] shrink-0 items-center gap-[15px] border-b border-[#a0a0a0] bg-linear-to-b from-white via-[#d8deee] via-40% to-[#e4e8f4] pb-px pl-[7px] font-['Noto_Sans',sans-serif] text-xs leading-[18px] text-[#686c74]">
      {MENUS.map(([before, key, after]) => (
        <button key={key + after}>
          {before}
          <u className="underline-offset-2">{key}</u>
          {after}
        </button>
      ))}
    </nav>
  );
}

const glossy = "rounded-[3px] border border-[#8a8a8a] bg-linear-to-b from-[#f4f4f4] via-[#ececec] to-[#d4d4d4]";

function Coordinate({ axis, value }: { axis: string; value: string }) {
  return (
    <div className="flex items-center">
      <button className="mr-[5px] flex h-[21px] w-[21px] items-center justify-center rounded-sm border border-[#a0a0a0] bg-[#f0f0f0] text-xs underline">
        {axis}
      </button>
      <div className="flex h-[21px] w-[72px] items-center rounded-sm border border-[#b0b0b0] bg-white pr-1">
        <input aria-label={`${axis} coordinate`} defaultValue={value} className="ml-[2px] min-w-0 flex-1 bg-[#f0f0f0] text-[11px]" />
        <Caret className="ml-1 text-[#a0a0a0]" />
      </div>
    </div>
  );
}

function SmallButton({ name, raised }: { name: string; raised?: boolean }) {
  return (
    <button
      aria-label={name}
      className={clsx(
        "flex h-[22px] w-[22px] shrink-0 items-center justify-center",
        raised ? glossy : "border-r border-b border-[#c8c8c8] bg-[#f0f0f0]",
      )}
    >
      <Icon name={name} size={18} />
    </button>
  );
}

function InputRow() {
  return (
    <div className="flex h-[31px] shrink-0 border-t border-b border-t-white border-b-[#a0a0a0] bg-[#d5dbec]">
      <div className="flex items-center border-r-2 border-[#a0a0a0] bg-[#ffffcc] pl-[5px] pr-[7px]">
        <div className="flex gap-[13px]">
          <Coordinate axis="X" value="-444.1333" />
          <Coordinate axis="Y" value="24.16556" />
          <Coordinate axis="Z" value="0.0" />
        </div>
        <div className="ml-[7px] flex items-center gap-px">
          <SmallButton name="AutoCursor fast point" />
          <SmallButton name="AutoCursor override" />
          <SmallButton name="AutoCursor android" />
          <button aria-label="AutoCursor options" className="mr-1 flex h-[22px] w-3 items-center justify-center border border-[#c8c8c8] bg-[#f0f0f0] text-[#a0a0a0]">
            <svg width="6" height="3"><path d="M0 0H6L3 3Z" fill="currentColor" /></svg>
          </button>
          <SmallButton name="Help" raised />
        </div>
      </div>
      <div className="flex items-center border-r-2 border-[#a0a0a0] bg-[#ffffcc] pl-1 pr-[7px] text-[11px]">
        <span className="mr-2 h-5 w-px bg-[#a0a0a0]" />
        <button className={clsx("mr-[11px] h-[21px] w-11", glossy)}>All...</button>
        <button className={clsx("mr-2.5 h-[21px] w-11", glossy)}>Only...</button>
        <SmallButton name="Select cursor" raised />
        <div className={clsx("relative ml-[7px] h-[21px] w-[72px]", glossy)}>
          <select aria-label="Selection mode" className="h-full w-full appearance-none pl-1 text-xs">
            <option>In</option>
          </select>
          <Caret className="pointer-events-none absolute right-1 top-2" />
        </div>
        <div className="ml-[9px] mr-1 flex h-[22px] w-[35px] items-center gap-2 bg-[#f0f0f0] pl-1">
          <button aria-label="Selection window" className="h-[14px] w-[14px] border border-dashed border-[#303030]" />
          <svg width="6" height="4"><path d="M0 0H6L3 4Z" /></svg>
        </div>
        <div className="flex gap-0.5">
          <SmallButton name="Arrow" />
          <SmallButton name="Hex corner" />
        </div>
        <div className="ml-1.5 flex gap-0.5">
          <SmallButton name="Hex" />
          <SmallButton name="Hex" />
          <SmallButton name="Hex" />
        </div>
        <div className="ml-2 flex gap-0.5">
          <SmallButton name="Shaded hex" />
          <SmallButton name="Undo selection" raised />
        </div>
        <div className="ml-2 flex gap-2">
          <SmallButton name="Validate" raised />
          <div className="flex gap-0.5">
            <SmallButton name="None" />
            <SmallButton name="Disc" />
          </div>
          <SmallButton name="Help" raised />
        </div>
      </div>
      <ToolBar items={MOLDPLUS} />
    </div>
  );
}

function SideBar({ bars }: { bars: string[][] }) {
  return (
    <aside className="flex w-[30px] shrink-0 flex-col border-r border-[#a0a0a0] bg-[#d5dbec]">
      {bars.map((items, i) => (
        <div key={i} role="toolbar" className="flex flex-col items-center border-b-2 border-t border-b-[#a0a0a0] border-t-white bg-[#f0f0f0]">
          <span className="mb-[3px] mt-[7px] h-[2px] w-[22px] bg-[repeating-linear-gradient(to_right,#c0c0c0_0_2px,transparent_2px_5px)]" />
          {items.map((item, j) =>
            item === "|" ? (
              <span key={j} className="my-[3px] h-[2px] w-5 border-b border-white bg-[#a0a0a0]" />
            ) : (
              <button key={j} aria-label={item} className="flex h-[22px] w-6 items-center justify-center">
                <Icon name={item} size={16} />
              </button>
            ),
          )}
        </div>
      ))}
    </aside>
  );
}

// guides, one per indent level: "+"/"-" expander, "|" passing line, "T" branch, "L" last branch, " " blank
const children = (guide: string, tool: string, geometry: string, toolpath: string): [string, string, string][] => [
  [guide + "T", "Parameters", "Parameters"],
  [guide + "T", "Tool", tool],
  [guide + "T", "Geometry", geometry],
  [guide + "T", "Toolpath file", toolpath],
  [guide + "L", "Coolant", "Coolant... - Off"],
];

const TREE: [string, string, string][] = [
  ["-", "Machine group", "M-1"],
  [" +", "Properties", "Properties - Generic Mill MM"],
  [" -", "Toolpath group", "T-1"],
  ["  +", "Dirty", "1 - Surface Rough Pocket - [WCS: TOP] - [Tplane: TOP]"],
  ["  +", "Dirty", "2 - Surface Rough Pocket - [WCS: TOP] - [Tplane: TOP]"],
  ["  +", "Dirty checked", "3 - Surface Rough Pocket - [WCS: TOP] - [Tplane: TOP]"],
  ["  +", "Dirty checked", "4 - Surface Restmill - [WCS: TOP] - [Tplane: TOP]"],
  ["  +", "Dirty", "5 - Surface Finish Contour - [WCS: TOP] - [Tplane: TOP]"],
  ["  +", "Dirty checked", "6 - Surface Finish Contour - [WCS: TOP] - [Tplane: TOP]"],
  ["  -", "Folder checked", "7 - Surface Restmill - [WCS: TOP] - [Tplane: TOP]"],
  ...children("  |", "#0 - M6.35 ENDMILL1 FLAT -", "Geometry -", "Toolpath - 916.3K - T.NC - Program # 0"),
  ["  -", "Folder checked", "8 - Surface Restmill - [WCS: TOP] - [Tplane: TOP]"],
  ...children("  |", "#0 - M6.35 ENDMILL1 FLAT -", "Geometry -", "Toolpath - 62.4K - T.NC - Program # 0"),
  ["  T", "Insert position", ""],
  ["  -", "Folder open", "9 - Contour (Ramp) - [WCS: TOP] - [Tplane: TOP]"],
  ...children("   ", "#0 - M8.00 ENDMILL2 SPHERE -", "Geometry - (0) chain(s)", "Toolpath - 101.6K - T.NC - Program # 0"),
];

const GUIDE: Record<string, string> = {
  " ": "",
  "|": "M9.500 0V16",
  "T": "M9.500 0V16M9.500 8.500H19",
  "L": "M9.500 0V8.500H19",
  "+": "M9.500 0V16M13 8.500H19",
  "-": "M9.500 0V4M13 8.500H19",
};

function Guide({ kind }: { kind: string }) {
  const art = (
    <svg width="19" height="16" viewBox="0 0 19 16" aria-hidden className="shrink-0">
      <path d={GUIDE[kind]} fill="none" stroke="#000" strokeDasharray="1 1" />
      {(kind === "+" || kind === "-") && (
        <>
          <rect x="5.500" y="4.500" width="8" height="8" rx="1" fill="#f4f4f4" stroke="#909090" />
          <path d={kind === "+" ? "M7 8.500H12M9.500 6V11" : "M7 8.500H12"} stroke="#28408c" />
        </>
      )}
    </svg>
  );
  return kind === "+" || kind === "-" ? <button aria-label={kind === "+" ? "Expand" : "Collapse"}>{art}</button> : art;
}

function OperationsManager() {
  return (
    <section className="flex w-[357px] shrink-0 flex-col border-r-2 border-[#a0a0a0] bg-[#f0f0f0] pr-[5px] font-['Open_Sans',sans-serif]">
      <div className="-mr-[5px] flex h-[19px] items-center bg-[#b0b0b0] pl-1 pr-[5px]">
        <h2 className="font-['Liberation_Mono',monospace] text-[10px] text-black">Operations Manager</h2>
        <button aria-label="Panel menu" className={clsx("ml-auto flex h-[17px] w-[17px] items-center justify-center", glossy)}>
          <Caret />
        </button>
        <button aria-label="Close panel" className={clsx("ml-1.5 flex h-[17px] w-[17px] items-center justify-center font-['Liberation_Mono'] text-[11px]", glossy)}>
          X
        </button>
      </div>
      <div role="tablist" className="flex h-5 items-end border-b border-[#909090] text-[11px] leading-4">
        <button role="tab" aria-selected className="-mb-px h-5 w-[62px] border-x border-t border-[#909090] bg-white">Toolpaths</button>
        <button role="tab" aria-selected={false} className="h-[18px] w-[38px] border-r border-t border-[#909090] bg-linear-to-b from-[#f2f2f2] to-[#d8d8d8]">Solids</button>
      </div>
      <div className="mt-[3px] flex flex-col items-start pl-[3px]">
        <div role="toolbar" className="flex h-8 w-[279px] items-center border-y border-[#a0a0a0] pl-1">
          <PanelTools items={["Select all operations", "Select all dirty", "|", "Regenerate all", "Regenerate dirty", "|", "Backplot", "Verify", "G1", "Feed speed", "|", "Delete all operations", "|", "Panel help", "|"]} />
        </div>
        <div role="toolbar" className="flex h-[30px] items-center pl-[3px]">
          <PanelTools items={["Toggle locking", "Toggle display", "Toggle posting", "|", "Move down", "Move up", "Insert arrow", "Scroll arrow", "|", "Only display", "Display geometry"]} />
        </div>
      </div>
      <div className="mb-[5px] ml-1 mt-1.5 flex min-h-0 flex-1 flex-col border border-[#707880] bg-white">
        <ul className="min-h-0 flex-1 overflow-hidden pl-[3px] pr-px pt-px font-['Liberation_Mono',monospace] text-[10px] text-black">
          {TREE.map(([guides, icon, label], i) => (
            <li key={i} className="flex h-4 items-center overflow-hidden">
              {guides.split("").map((kind, level) => (
                <Guide key={level} kind={kind} />
              ))}
              <span className="mr-1 pl-px"><Icon name={icon} size={16} /></span>
              {label ? <span className="whitespace-nowrap pt-0.5 leading-[14px]">{label}</span> : <span className="-ml-px h-4 flex-1 bg-[#3399ff]" />}
            </li>
          ))}
        </ul>
        <div className="flex h-[17px] items-start bg-[#f0f0f0] px-1.5 text-[#404040]">
          <svg width="5" height="7" viewBox="0 0 5 7" className="mt-1"><path d="M5 0V7L0 3.500Z" /></svg>
          <div className="ml-2 flex h-[15px] w-[230px] items-center justify-center gap-0.5 rounded-sm border border-[#989898] bg-linear-to-b from-[#f4f4f4] to-[#d0d0d0]">
            <span className="h-[7px] w-px bg-[#606060]" />
            <span className="h-[7px] w-px bg-[#606060]" />
            <span className="h-[7px] w-px bg-[#606060]" />
          </div>
          <svg width="5" height="7" viewBox="0 0 5 7" className="ml-auto mt-1"><path d="M0 0V7L5 3.500Z" /></svg>
        </div>
      </div>
    </section>
  );
}

function PanelTools({ items }: { items: string[] }) {
  return (
    <>
      {items.map((item, i) =>
        item === "|" ? (
          <span key={i} className="mx-[2px] h-[18px] w-[2px] bg-[#a8a8a8]" />
        ) : (
          <button key={i} aria-label={item} className="flex w-[23px] items-center justify-center">
            {item === "G1" ? <b className="font-['Liberation_Serif'] text-sm leading-4 text-[#a0a0a0]">G1</b> : <Icon name={item} size={16} />}
          </button>
        ),
      )}
    </>
  );
}

const PADS = [
  "M170 200Q200 150 320 97Q345 92 360 115Q395 175 400 225Q398 240 370 239Q270 232 175 205Z",
  "M525 85Q530 72 550 74Q680 100 742 143Q730 155 700 165Q640 185 590 212Q560 222 545 210Q520 150 525 85Z",
  "M625 310Q622 295 640 290Q720 265 820 248Q845 250 845 268Q845 340 805 393Q800 396 790 393Q720 360 650 330Q628 322 625 310Z",
  "M137 325Q140 315 160 314Q250 310 345 318Q372 325 368 345Q330 410 265 440Q252 452 240 445Q170 390 137 325Z",
  "M425 500Q420 480 430 460Q450 410 490 380Q515 368 540 385Q610 430 658 483Q640 500 560 510Q480 516 425 505Z",
];
const WINDOWS = [
  "M215 190L320 123Q335 120 345 135Q372 180 371 220L365 221L225 195Z",
  "M545 105Q550 98 570 98Q640 108 695 145Q699 152 680 155L570 202Q560 205 555 190Q543 150 545 105Z",
  "M662 318L800 272Q810 270 809 290Q808 330 785 371L775 372L662 322Z",
  "M178 335Q180 329 200 329L325 343Q340 346 330 356Q300 395 258 421Q248 424 240 415Q205 375 178 335Z",
  "M455 480Q470 440 505 412Q515 407 528 412Q580 440 615 465Q612 472 590 475Q530 488 462 490Q453 490 455 480Z",
];

function Pads() {
  return (
    <>
      {PADS.map((d) => (
        <path key={d} d={d} fill="#007800" stroke="#a82800" strokeWidth="3" />
      ))}
      {WINDOWS.map((d) => (
        <path key={d} d={d} fill="#783c00" stroke="#d41c00" strokeWidth="3" />
      ))}
    </>
  );
}

function Viewport() {
  return (
    <svg viewBox="387 195 1263 828" preserveAspectRatio="xMidYMid slice" role="img" aria-label="Shaded part" className="absolute inset-0 h-full w-full">
      <defs>
        <linearGradient id="skirt" x1="0" x2="1" y1="0" y2="0">
          <stop offset="0" stopColor="#006c00" />
          <stop offset="0.6" stopColor="#005400" />
          <stop offset="1" stopColor="#003400" />
        </linearGradient>
        <linearGradient id="skirtDark" x1="0" x2="1" y1="0" y2="0">
          <stop offset="0" stopColor="#145a1a" />
          <stop offset="1" stopColor="#003000" />
        </linearGradient>
        <linearGradient id="hub" x1="0" x2="1" y1="1" y2="0">
          <stop offset="0" stopColor="#006800" />
          <stop offset="0.55" stopColor="#005c00" />
          <stop offset="0.85" stopColor="#108418" />
          <stop offset="1" stopColor="#48a848" />
        </linearGradient>
        <linearGradient id="bevel" x1="0" x2="1" y1="0" y2="0">
          <stop offset="0" stopColor="#007400" />
          <stop offset="0.5" stopColor="#007800" />
          <stop offset="0.6" stopColor="#2c842c" />
          <stop offset="0.68" stopColor="#005000" />
          <stop offset="1" stopColor="#005000" />
        </linearGradient>
      </defs>
      <path d="M380 190H1660V1030H380Z" fill="#000099" />

      {/* block: top face, then the two visible sides */}
      <path d="M880 283L504 500L1131 862L1506 646Z" fill="none" stroke="#c41850" />
      <path d="M880 292L960 338L963 351L1415 612L1427 607L1506 654V722L1131 939L504 577V509L585 463L595 468L797 351L801 338Z" fill="#007800" />
      <path d="M504 509L586 555L588 567L1047 833L1049 824L1131 870V939L504 577Z" fill="#005000" />
      <path d="M1131 870L1211 824L1214 833L1424 713L1427 699L1506 654V722L1131 939Z" fill="#004400" />

      {/* corner bosses */}
      <path d="M801 338L860 372Q881 382 901 372L960 338L963 351L904 385Q890 391 874 387L860 383L797 351Z" fill="url(#bevel)" />
      <path d="M801 338L860 372Q868 377 880 377" fill="none" stroke="#2c942c" />
      <path d="M646 500Q652 508 654 518Q654 528 640 537L588 567L586 555L642 525Q652 516 646 500Z" fill="#005600" />
      <path d="M595 468L633 488Q648 498 649 508" fill="none" stroke="#004800" strokeDasharray="1 1" />
      <path d="M1365 643Q1358 655 1370 667L1427 699" fill="none" stroke="#208820" />
      <path d="M1370 667L1427 699" stroke="#58b458" strokeWidth="1.200" />
      <path d="M1128 786L1152 790L1204 820" fill="none" stroke="#005000" strokeDasharray="1 1" />
      {[[880, 340], [587, 508], [1423, 653], [1131, 822]].map(([cx, cy]) => (
        <ellipse key={cx} cx={cx} cy={cy} rx="31" ry="18" fill="#783c00" />
      ))}

      {/* runner between the wheels */}
      <path d="M1031 543Q1047 550 1041 565Q1034 580 1003 598Q975 613 970 626Q967 637 977 645" fill="none" stroke="#783c00" strokeWidth="15" />
      <path d="M1033 544Q1047 550 1041 565Q1034 580 1003 598Q975 613 970 626Q968 636 975 642" fill="none" stroke="#902c00" strokeWidth="5" />

      {/* upper wheel */}
      <ellipse cx="877" cy="517" rx="150" ry="86" fill="#006e00" stroke="#a82800" />
      <path d="M774 457Q790 445 811 441" fill="none" stroke="#102800" strokeWidth="2" />
      <g transform="translate(490 270) scale(0.357 0.333)">
        <path d="M1148 478L1198 525L1185 560H1120Z" fill="#003800" />
        <path d="M1180 500Q1250 505 1310 530" fill="none" stroke="#70b470" strokeWidth="2" strokeDasharray="6 3" />
        <path d="M1270 655L1430 662L1478 745Q1460 758 1380 760Q1330 745 1270 748Z" fill="url(#skirt)" />
        <path d="M1370 764L1460 756M1420 800L1465 792" stroke="#60b060" strokeWidth="2" />
        <path d="M1400 782L1452 838Q1400 925 1270 970V865Q1350 840 1400 782Z" fill="url(#skirtDark)" />
      </g>
      <g transform="translate(1051 595) scale(-0.357 -0.333)">
        <Pads />
      </g>

      {/* lower wheel */}
      <ellipse cx="1135" cy="665" rx="150" ry="87" fill="#006e00" stroke="#a82800" />
      <g transform="translate(960 550) scale(0.357 0.333)">
        <path d="M72 300Q90 220 190 165M350 103Q430 90 525 90" fill="none" stroke="#102800" strokeWidth="5" />
        <path d="M370 105L420 250L490 280V130L520 90Z" fill="#006200" />
        <path d="M430 125L460 265" stroke="#003c00" strokeWidth="5" />
        <path d="M490 130V240L525 270" fill="none" stroke="#1c8420" strokeWidth="3" />
        <path d="M390 245L400 225L460 270L600 330L620 350L470 420L370 350Z" fill="#005200" />
        <path d="M175 205L120 275Q125 290 240 312L383 290L380 240Z" fill="#006200" />
        <path d="M120 275Q125 290 240 312L383 290" fill="none" stroke="#1c8c1c" strokeWidth="3" />
        <path d="M742 145L800 215Q700 250 600 325L570 290V225Z" fill="url(#skirtDark)" />
        <path d="M625 315L610 365Q640 430 680 455Q750 490 820 498L805 394Z" fill="#006c00" />
        <path d="M845 258Q890 310 885 370Q870 450 820 498L805 394Q850 330 845 258Z" fill="#003600" />
        <path d="M610 365Q640 430 680 455Q750 490 820 498" fill="none" stroke="#48a848" strokeWidth="3" />
        <path d="M137 325L92 375Q110 480 260 550L257 448Z" fill="#006600" />
        <path d="M257 448L260 550Q340 500 385 400L370 345Z" fill="#003c00" />
        <path d="M422 505L375 590Q520 620 710 558L658 485Q560 520 422 505Z" fill="url(#skirt)" />
        <path d="M445 400Q410 510 315 573" fill="none" stroke="#003c00" strokeWidth="5" />
        <path d="M430 400L385 480" stroke="#0c800c" strokeWidth="10" />
        <path d="M565 395L590 375L680 455L650 450Z" fill="#108418" />
        <path d="M665 495L760 530" stroke="#40a040" strokeWidth="3" />
        <path d="M285 322L385 298V320L345 332Z" fill="#50a850" />
        <ellipse cx="488" cy="344" rx="92" ry="58" fill="url(#hub)" stroke="#003800" strokeWidth="4" />
        <path d="M400 315Q430 288 500 286Q560 292 578 320" fill="none" stroke="#188018" strokeWidth="3" />
        <Pads />
      </g>

      <path d="M504 500L1131 862L1506 646" fill="none" stroke="#a83000" />

      {/* axes, view names and scale */}
      <path d="M427 983V967" stroke="#1010e0" />
      <path d="M427 983L441 976" stroke="#208020" />
      <path d="M427 983L442 992" stroke="#e02040" />
      <path d="M1529 987V1011M1626 987V1011M1529 999H1626" stroke="#f0f080" />
      <g fontFamily="Open Sans, sans-serif" fontSize="12" fontWeight="700">
        <text x="424" y="964" fill="#1010f0">Z</text>
        <text x="445" y="976" fill="#208020">Y</text>
        <text x="445" y="1000" fill="#e02040">X</text>
        <text x="392" y="1009" fill="#c0c8f0">Gview:ISO</text>
        <text x="466" y="1009" fill="#c0c8f0">WCS:TOP</text>
        <text x="535" y="1009" fill="#c0c8f0">T/Cplane:TOP</text>
        <text x="1575" y="995" fill="#e02020" textAnchor="middle">48.776</text>
        <text x="1573" y="1010" fill="#c0c8f0" textAnchor="middle">Metric</text>
      </g>
    </svg>
  );
}

function WarningDialog() {
  return (
    <div role="alertdialog" aria-label="Warning" className="absolute left-[346px] top-[258px] flex w-[215px] flex-col rounded-t-md border border-[#203040] bg-[#b8d0e8] px-px font-['Noto_Sans','Noto_Sans_CJK_SC',sans-serif] text-xs text-black">
      <div className="flex h-6 items-center rounded-t-md bg-linear-to-b from-[#98b0d0] to-[#b8d0ec] pl-0.5 pr-[3px]">
        <svg width="15" height="12" viewBox="0 0 15 12" aria-hidden>
          <rect x="0.500" y="0.500" width="14" height="11" fill="#f4f4f4" stroke="#8090a0" />
          <rect x="2" y="2" width="6" height="7" fill="#408880" />
          <path d="M12.500 2V6" stroke="#202060" />
        </svg>
        <h2 className="ml-1.5 leading-5">Warning</h2>
        <button aria-label="Close" className="ml-auto flex h-[17px] w-[31px] items-center justify-center rounded-sm border border-[#601818] bg-linear-to-b from-[#e8a090] via-[#c84030] to-[#d87060]">
          <svg width="12" height="10" viewBox="0 0 12 10">
            <path d="M2 1L10 9M10 1L2 9" stroke="#505860" strokeWidth="4" />
            <path d="M2.500 1.500L9.500 8.500M9.500 1.500L2.500 8.500" stroke="#fff" strokeWidth="2.200" />
          </svg>
        </button>
      </div>
      <div className="flex h-[92px] items-center gap-[9px] bg-white pl-[25px]">
        <svg width="31" height="28" viewBox="0 0 31 28" aria-hidden>
          <path d="M15.500 1L30 27H1Z" fill="#fcc820" stroke="#a8a8a8" strokeWidth="2" strokeLinejoin="round" />
          <path d="M15.500 5L26 24H15.500Z" fill="#f0a010" opacity="0.500" />
          <path d="M13.500 9H17.500L16.500 19H14.500Z" fill="#181818" />
          <circle cx="15.500" cy="22" r="1.800" fill="#181818" />
        </svg>
        <p className="pb-1 leading-5">Permission denied</p>
      </div>
      <div className="flex justify-end bg-[#f0f0f0] pb-[15px] pr-[10px] pt-[13px]">
        <button className="h-7 w-[86px] rounded-[3px] border border-[#3c8cb0] bg-linear-to-b from-[#f4f4f4] via-[#e8e8e8] to-[#cecece] shadow-[inset_0_0_0_1px_#60d0f0]">确定</button>
      </div>
    </div>
  );
}

function StatusSelect({ label, className, children }: { label: string; className: string; children: ReactNode }) {
  return (
    <button aria-label={label} className={clsx("flex h-[26px] items-center justify-between bg-white px-1.5", className)}>
      {children}
      <Caret />
    </button>
  );
}

function StatusBar() {
  const button = "h-[19px] shrink-0 rounded-sm border border-[#a0a0a0] bg-[#f0f0f0]";
  return (
    <footer className="relative flex h-[27px] shrink-0 items-center overflow-hidden border-t-2 border-[#a0a0a0] bg-[#f0eeee] pl-0.5 pt-0.5 font-['Open_Sans',sans-serif] text-xs text-black">
      <p className="text-[13px]">For help, press Alt+H.</p>
      <div className="ml-auto flex shrink-0 items-center gap-1.5">
        <button className={clsx("w-6", button)}>3D</button>
        <button className={clsx("w-[52px]", button)}>Gview</button>
        <button className={clsx("w-[39px] text-[11px]", button)}>Planes</button>
        <div className="flex items-center">
          <button className={clsx("w-[14px]", button)}>Z</button>
          <div className="flex h-[25px] w-[98px] items-center bg-white pl-1 pr-1">
            <div className="flex h-[17px] w-[74px] items-center bg-[#ffff80]">
              <input aria-label="Z depth" defaultValue="0.0" className="w-[18px] bg-[#3399ff] text-[11px] leading-[17px] text-white" />
            </div>
            <Caret className="ml-auto" />
          </div>
        </div>
        <div className="flex items-center gap-[3px]">
          <button aria-label="System color" className="h-[18px] w-10 bg-[#ff0000]">12</button>
          <button aria-label="Color list" className="flex h-[18px] w-3 items-center justify-center border border-[#a0a0a0]">
            <svg width="8" height="8"><path d="M0 0H8L4 8Z" /></svg>
          </button>
        </div>
        <div className="flex items-center">
          <button className={clsx("w-9", button)}>Level</button>
          <div className="flex h-[25px] w-[124px] items-center bg-white pl-1 pr-1">
            <input aria-label="Level number" defaultValue="50" className="min-w-0 flex-1" />
            <Caret />
          </div>
        </div>
        <button className={clsx("w-[66px]", button)}>Attributes</button>
        <StatusSelect label="Point style" className="w-[38px]">
          <svg width="9" height="9" stroke="#000"><path d="M4.500 0V9M0 4.500H9M1 8L8 1" /></svg>
        </StatusSelect>
        <StatusSelect label="Line style" className="w-[62px]">
          <span className="h-[3px] w-10 bg-black" />
        </StatusSelect>
        <StatusSelect label="Line width" className="w-[70px]">
          <span className="h-px w-11 bg-black" />
        </StatusSelect>
        <button className={clsx("w-[45px]", button)}>WCS</button>
        <button className={clsx("w-[60px]", button)}>Groups</button>
        <button className={clsx("w-3", button)}>?</button>
        <button className={clsx("w-[14px] border-r-0", button)}>?</button>
      </div>
      <span className="absolute right-[18px] top-0.5 font-['DejaVu_Sans','Noto_Sans_CJK_SC',sans-serif] text-[17px] leading-5 text-white [-webkit-text-stroke:2px_#e82020] [paint-order:stroke_fill]">
        三维网www.3dportal.cn
      </span>
    </footer>
  );
}

export default function App() {
  return (
    <div className="flex h-screen flex-col overflow-hidden bg-[#f0f0f0] font-['Liberation_Sans',sans-serif] text-black">
      <Taskbar />
      <TitleBar />
      <MenuBar />
      {[ROW_ONE, ROW_TWO].map((row, i) => (
        <div key={i} className={clsx("flex h-[30px] shrink-0 bg-[#d5dbec]", i === 0 && "bg-linear-to-b from-white to-[#d5dbec] to-40%")}>
          {row.map((items, j) => (
            <ToolBar key={j} items={items} />
          ))}
        </div>
      ))}
      <InputRow />
      <div className="flex h-[31px] shrink-0 items-center border-b border-[#909090] bg-[#f0f0f0] pl-[187px] text-[11px]">Ribbon Bar</div>
      <main className="flex min-h-0 flex-1">
        <SideBar bars={LEFT_BARS} />
        <OperationsManager />
        <div className="relative min-w-0 flex-1 overflow-hidden bg-[#000099]">
          <Viewport />
          <WarningDialog />
        </div>
        <SideBar bars={RIGHT_BARS} />
      </main>
      <StatusBar />
    </div>
  );
}
